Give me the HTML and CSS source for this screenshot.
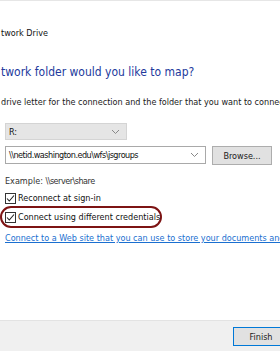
FILE: index.html
```html
<!DOCTYPE html>
<html lang="en">
  <head>
    <meta charset="UTF-8" />
    <meta name="viewport" content="width=device-width, initial-scale=1.0" />
    <title>Map Network Drive</title>
    <link rel="stylesheet" href="styles.css">
  </head>
  <body>
    <div class="wizard">
      <div class="title">twork Drive</div>

      <div class="content">
        <h1 class="heading">twork folder would you like to map?</h1>
        <p class="intro">drive letter for the connection and the folder that you want to connect</p>

        <div class="field-row">
          <div class="combo drive">
            <span class="combo-value">R:</span>
            <svg class="chevron" width="9" height="6" viewBox="0 0 9 6"><path d="M1 1l3.5 3.5L8 1" fill="none" stroke="#888" stroke-width="1"/></svg>
          </div>
        </div>

        <div class="field-row">
          <div class="combo folder">
            <span class="combo-value path">\\netid.washington.edu\wfs\jsgroups</span>
            <svg class="chevron" width="9" height="6" viewBox="0 0 9 6"><path d="M1 1l3.5 3.5L8 1" fill="none" stroke="#888" stroke-width="1"/></svg>
          </div>
          <button class="button">Browse...</button>
        </div>

        <p class="example">Example: <span class="path">\\server\share</span></p>

        <label class="check first">
          <span class="box"><svg width="9" height="9" viewBox="0 0 9 9"><path d="M1 4.5l2.3 2.5L8 1.5" fill="none" stroke="#222" stroke-width="1.1"/></svg></span>
          Reconnect at sign-in
        </label>

        <label class="check circled">
          <span class="box"><svg width="9" height="9" viewBox="0 0 9 9"><path d="M1 4.5l2.3 2.5L8 1.5" fill="none" stroke="#222" stroke-width="1.1"/></svg></span>
          Connect using different credentials
        </label>

        <a class="link" href="#">Connect to a Web site that you can use to store your documents and pictures</a>
      </div>

      <div class="footer">
        <button class="button default">Finish</button>
      </div>
    </div>
  </body>
</html>
```

FILE: styles.css
```css
html,
body {
  margin: 0;
  padding: 0;
  background: #ffffff;
}

body {
  font-family: "Liberation Sans Narrow", "DejaVu Sans Condensed", "Liberation Sans", sans-serif;
  font-size: 9px;
  color: #111;
}

.wizard {
  display: flex;
  flex-direction: column;
  height: 351px;
  overflow: hidden;
  border-top: 1px solid #e6e6e6;
}

.title {
  padding: 24px 0 0 1px;
  line-height: 16px;
  white-space: nowrap;
}

.content {
  flex: 1;
  padding-left: 5px;
}

.heading {
  margin: 21px 0 0 -4px;
  font-size: 12px;
  font-weight: normal;
  line-height: 20px;
  color: #22399c;
  white-space: nowrap;
}

.intro {
  margin: 12px 0 0 -4px;
  line-height: 16px;
  color: #1a1a1a;
  white-space: nowrap;
}

.field-row {
  display: flex;
  align-items: center;
  gap: 6px;
}

.combo {
  display: flex;
  align-items: center;
  justify-content: space-between;
  box-sizing: border-box;
  height: 17px;
  padding: 0 6px 0 3px;
  border: 1px solid #c9c9c9;
  white-space: nowrap;
}

.drive {
  margin-top: 13px;
  width: 122px;
  background: #e5e5e5;
  border-color: #d4d4d4;
}

.folder {
  margin-top: 5px;
  width: 201px;
  height: 18px;
  background: #ffffff;
  border-color: #a9a9a9;
}

.path {
  letter-spacing: -0.5px;
}

.chevron {
  flex-shrink: 0;
}

.button {
  box-sizing: border-box;
  height: 19px;
  padding: 0;
  border: 1px solid #adadad;
  background: #e1e1e1;
  font-family: inherit;
  font-size: 9px;
  color: #1a1a1a;
}

.field-row .button {
  margin-top: 6px;
  width: 60px;
}

.example {
  margin: 8px 0 0;
  line-height: 16px;
  color: #333;
}

.check {
  display: flex;
  align-items: center;
  gap: 2px;
  line-height: 16px;
  white-space: nowrap;
}

.first {
  margin-top: 1px;
}

.box {
  display: flex;
  align-items: center;
  justify-content: center;
  box-sizing: border-box;
  width: 11px;
  height: 11px;
  border: 1px solid #333;
  background: #fff;
}

.circled {
  align-self: flex-start;
  width: 155px;
  margin: 0 0 0 -5px;
  padding: 1px 0 1px 3px;
  border: 2px solid #7d1414;
  border-radius: 12px;
}

.link {
  display: block;
  margin-top: 2px;
  line-height: 16px;
  color: #1a6fd0;
  text-decoration: underline;
  white-space: nowrap;
}

.footer {
  display: flex;
  justify-content: flex-end;
  height: 32px;
  box-sizing: border-box;
  padding-top: 6px;
  background: #f0f0f0;
  border-top: 1px solid #e3e3e3;
}

.default {
  width: 56px;
  margin-right: -9px;
  border: 1px solid #0078d7;
}
```
